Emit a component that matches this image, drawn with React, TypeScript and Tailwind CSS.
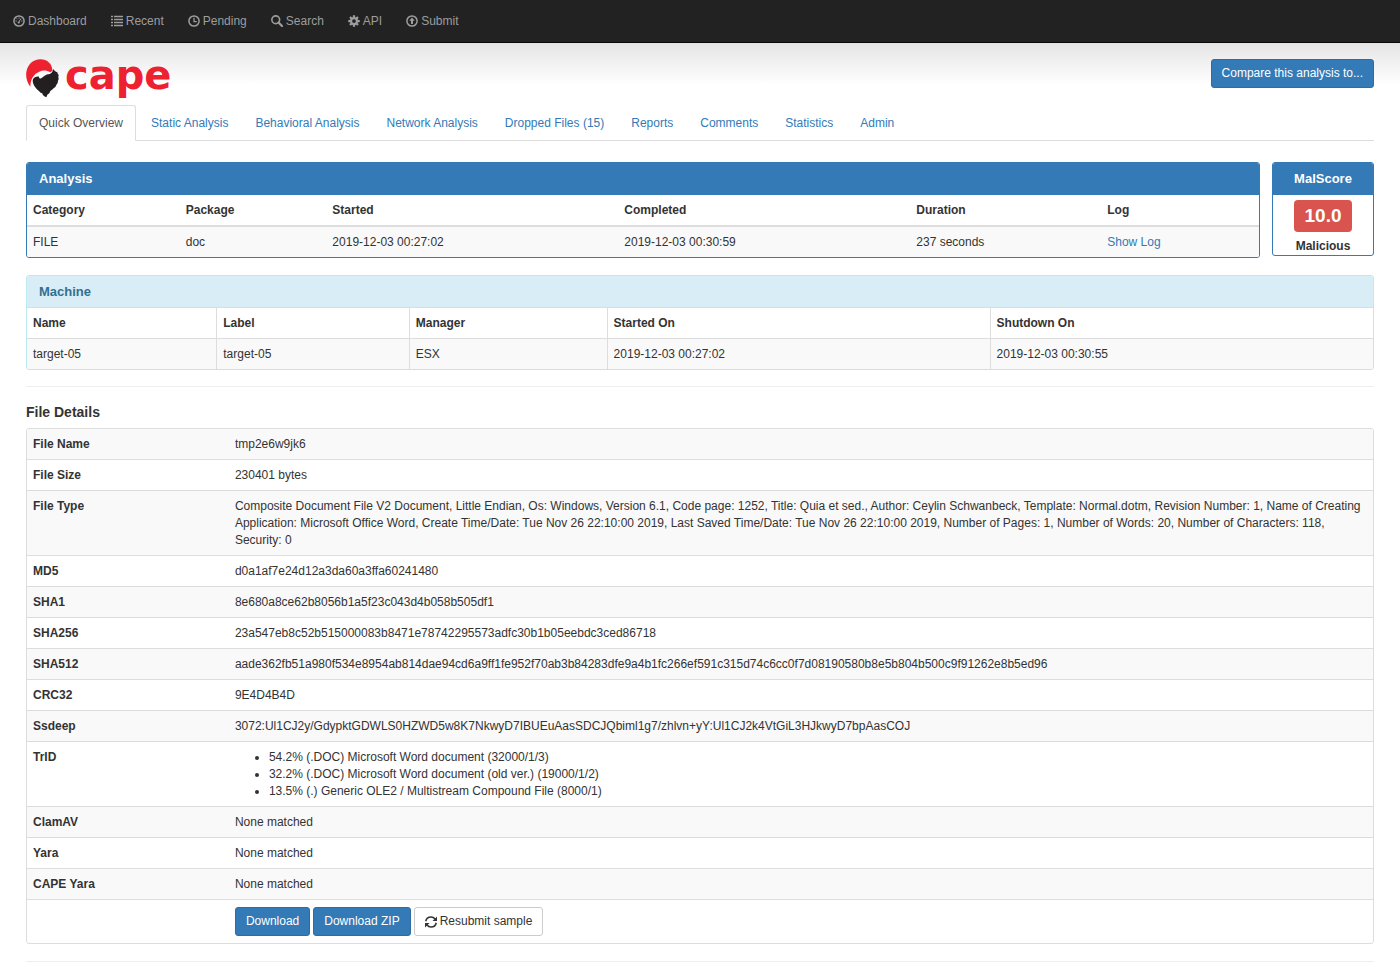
import type { ReactNode } from "react";

type IconProps = { children: ReactNode };

function Icon({ children }: IconProps) {
  return (
    <svg viewBox="0 0 24 24" className="size-3 shrink-0" fill="none" stroke="currentColor" aria-hidden="true">
      {children}
    </svg>
  );
}

const DashboardIcon = () => (
  <Icon>
    <circle cx="12" cy="12" r="10.2" strokeWidth="3" />
    <path d="M11.5 14.5 16 7" strokeWidth="2" />
    <circle cx="11.5" cy="15" r="2.2" fill="currentColor" stroke="none" />
    <path d="M5 12h2.5M7 7l1.5 1.5M12 5v2.5M16.5 12H19" strokeWidth="2" />
  </Icon>
);

const ListIcon = () => (
  <Icon>
    <path d="M0 3h4M0 9h4M0 15h4M0 21h4M6 3h18M6 9h18M6 15h18M6 21h18" strokeWidth="3" />
  </Icon>
);

const ClockIcon = () => (
  <Icon>
    <circle cx="12" cy="12" r="10.2" strokeWidth="3" />
    <path d="M12 5.5V13h5.5" strokeWidth="2.5" />
  </Icon>
);

const SearchIcon = () => (
  <Icon>
    <circle cx="9.5" cy="9.5" r="7.8" strokeWidth="3.2" />
    <path d="m15 15 7 7" strokeWidth="4.5" strokeLinecap="round" />
  </Icon>
);

const CogIcon = () => (
  <Icon>
    <circle cx="12" cy="12" r="6" strokeWidth="4.5" />
    <path d="M12 .5V5M12 19v4.5M.5 12H5M19 12h4.5M4 4l3 3M17 17l3 3M20 4l-3 3M7 17l-3 3" strokeWidth="4.5" />
  </Icon>
);

const UploadIcon = () => (
  <Icon>
    <circle cx="12" cy="12" r="10.2" strokeWidth="3" />
    <path d="m12 5 5.5 6.5H14V18h-4v-6.5H6.5z" fill="currentColor" stroke="none" />
  </Icon>
);

const RefreshIcon = () => (
  <Icon>
    <path
      d="M1.5 10.5C2.5 5 7 2 12 2c3 0 6 1.3 8 4M22.5 13.5c-1 5.5-5.5 8.5-10.5 8.5-3 0-6-1.3-8-4"
      strokeWidth="3"
    />
    <path d="M24 1v9h-9zM0 23v-9h9z" fill="currentColor" stroke="none" />
  </Icon>
);

const navItems = [
  { label: "Dashboard", icon: <DashboardIcon /> },
  { label: "Recent", icon: <ListIcon /> },
  { label: "Pending", icon: <ClockIcon /> },
  { label: "Search", icon: <SearchIcon /> },
  { label: "API", icon: <CogIcon /> },
  { label: "Submit", icon: <UploadIcon /> },
];

const tabs = [
  "Quick Overview",
  "Static Analysis",
  "Behavioral Analysis",
  "Network Analysis",
  "Dropped Files (15)",
  "Reports",
  "Comments",
  "Statistics",
  "Admin",
];

const trid = [
  "54.2% (.DOC) Microsoft Word document (32000/1/3)",
  "32.2% (.DOC) Microsoft Word document (old ver.) (19000/1/2)",
  "13.5% (.) Generic OLE2 / Multistream Compound File (8000/1)",
];

const primaryButton =
  "h-[29px] rounded-[3px] border border-[#2e6da4] bg-[#337ab7] px-2.5 text-white hover:bg-[#286090]";

const fileDetails: { name: string; value: ReactNode }[] = [
  { name: "File Name", value: "tmp2e6w9jk6" },
  { name: "File Size", value: "230401 bytes" },
  {
    name: "File Type",
    value:
      "Composite Document File V2 Document, Little Endian, Os: Windows, Version 6.1, Code page: 1252, Title: Quia et sed., Author: Ceylin Schwanbeck, Template: Normal.dotm, Revision Number: 1, Name of Creating Application: Microsoft Office Word, Create Time/Date: Tue Nov 26 22:10:00 2019, Last Saved Time/Date: Tue Nov 26 22:10:00 2019, Number of Pages: 1, Number of Words: 20, Number of Characters: 118, Security: 0",
  },
  { name: "MD5", value: "d0a1af7e24d12a3da60a3ffa60241480" },
  { name: "SHA1", value: "8e680a8ce62b8056b1a5f23c043d4b058b505df1" },
  { name: "SHA256", value: "23a547eb8c52b515000083b8471e78742295573adfc30b1b05eebdc3ced86718" },
  {
    name: "SHA512",
    value:
      "aade362fb51a980f534e8954ab814dae94cd6a9ff1fe952f70ab3b84283dfe9a4b1fc266ef591c315d74c6cc0f7d08190580b8e5b804b500c9f91262e8b5ed96",
  },
  { name: "CRC32", value: "9E4D4B4D" },
  {
    name: "Ssdeep",
    value: "3072:Ul1CJ2y/GdypktGDWLS0HZWD5w8K7NkwyD7IBUEuAasSDCJQbiml1g7/zhlvn+yY:Ul1CJ2k4VtGiL3HJkwyD7bpAasCOJ",
  },
  {
    name: "TrID",
    value: (
      <ul className="list-disc pl-[34px]">
        {trid.map((match) => (
          <li key={match}>{match}</li>
        ))}
      </ul>
    ),
  },
  { name: "ClamAV", value: "None matched" },
  { name: "Yara", value: "None matched" },
  { name: "CAPE Yara", value: "None matched" },
];

function Logo() {
  return (
    <a href="#" className="flex h-10 items-start gap-1.5" aria-label="cape">
      <svg viewBox="0 5 99 120" className="h-10 w-[33px]" aria-hidden="true">
        <path
          d="M13 88C3 76-1 60 1 45 4 22 22 6 43 6c21 0 36 14 36 34l-6 5C62 38 50 38 40 43 24 50 14 62 13 88Z"
          fill="#ee2130"
        />
        <path
          d="M21 66c4-7 10-9 18-8-1 4 3 6 7 5 7-5 11-10 19-12 9-1 15-4 16-16l5 5 4 3 4 2 1 4 3 4-1 6 1 6-2 5-1 7-4 6-3 6-5 4-5 4-5 4-3 7-6 4-3 8c-7-3-12-7-13-14l-3 2c-3-6-11-9-15-15-7-9-12-20-9-27Z"
          fill="#231f20"
        />
      </svg>
      <span className="font-['DejaVu_Sans',sans-serif] text-[40px] leading-8 font-bold text-[#ee2130]">cape</span>
    </a>
  );
}

export default function App() {
  return (
    <div className="font-['Liberation_Sans',Arial,sans-serif] text-[12px] leading-[17px] text-[#333]">
      <nav className="flex h-[43px] border-b border-[#080808] bg-[#222] px-px">
        {navItems.map((item) => (
          <a key={item.label} href="#" className="flex items-center gap-[3px] px-3 text-[#9d9d9d]">
            {item.icon}
            {item.label}
          </a>
        ))}
      </nav>

      <main className="bg-linear-to-b from-[#e5e5e5] to-white to-[42px] px-[26px] pt-4 pb-3">
        <header className="flex items-start justify-between">
          <Logo />
          <button type="button" className={primaryButton}>
            Compare this analysis to...
          </button>
        </header>

        <div className="mt-1.5 flex gap-[3px] border-b border-[#ddd]">
          {tabs.map((tab, i) => (
            <a
              key={tab}
              href="#"
              className={
                i === 0
                  ? "-mb-px rounded-t-[3px] border border-[#ddd] border-b-white bg-white px-3 pt-[9px] pb-[7px] text-[#555]"
                  : "px-3 pt-2.5 pb-2 text-[#337ab7] hover:underline"
              }
            >
              {tab}
            </a>
          ))}
        </div>

        <div className="mt-[21px] flex items-start gap-3">
          <section className="flex-1 overflow-hidden rounded-[3px] border border-[#337ab7]">
            <h2 className="bg-[#337ab7] px-3 py-2 text-[13px] leading-4 font-bold text-white">Analysis</h2>
            <table className="w-full table-fixed text-left">
              <thead>
                <tr className="border-b-2 border-[#ddd]">
                  <th className="w-[12.4%] px-1.5 pt-[7px] pb-[6px]">Category</th>
                  <th className="w-[11.9%] px-1.5">Package</th>
                  <th className="w-[23.7%] px-1.5">Started</th>
                  <th className="w-[23.7%] px-1.5">Completed</th>
                  <th className="w-[15.5%] px-1.5">Duration</th>
                  <th className="px-1.5">Log</th>
                </tr>
              </thead>
              <tbody>
                <tr className="bg-[#f9f9f9]">
                  <td className="px-1.5 pt-[7px] pb-[6px]">FILE</td>
                  <td className="px-1.5">doc</td>
                  <td className="px-1.5">2019-12-03 00:27:02</td>
                  <td className="px-1.5">2019-12-03 00:30:59</td>
                  <td className="px-1.5">237 seconds</td>
                  <td className="px-1.5">
                    <a href="#" className="text-[#337ab7] hover:underline">
                      Show Log
                    </a>
                  </td>
                </tr>
              </tbody>
            </table>
          </section>

          <section className="w-[102px] overflow-hidden rounded-[3px] border border-[#337ab7] text-center font-bold">
            <h2 className="bg-[#337ab7] py-2 text-[13px] leading-4 text-white">MalScore</h2>
            <div className="flex flex-col items-center gap-1.5 pt-[5px]">
              <span className="rounded-[4px] bg-[#d9534f] px-[11px] text-[19px] leading-8 text-white">10.0</span>
              <span>Malicious</span>
            </div>
          </section>
        </div>

        <section className="mt-[17px] overflow-hidden rounded-[3px] border border-[#bce8f1]">
          <h2 className="border-b border-[#bce8f1] bg-[#d9edf7] px-3 pt-2 pb-[7px] text-[13px] leading-4 font-bold text-[#31708f]">
            Machine
          </h2>
          <table className="w-full table-fixed text-left">
            <thead>
              <tr className="divide-x divide-[#ddd] border-b border-[#ddd]">
                <th className="w-[14.1%] px-1.5 pt-[7px] pb-[6px]">Name</th>
                <th className="w-[14.3%] px-1.5">Label</th>
                <th className="w-[14.7%] px-1.5">Manager</th>
                <th className="px-1.5">Started On</th>
                <th className="px-1.5">Shutdown On</th>
              </tr>
            </thead>
            <tbody>
              <tr className="divide-x divide-[#ddd] bg-[#f9f9f9]">
                <td className="px-1.5 pt-[7px] pb-[6px]">target-05</td>
                <td className="px-1.5">target-05</td>
                <td className="px-1.5">ESX</td>
                <td className="px-1.5">2019-12-03 00:27:02</td>
                <td className="px-1.5">2019-12-03 00:30:55</td>
              </tr>
            </tbody>
          </table>
        </section>

        <hr className="mt-4 mb-[17px] border-[#eee]" />

        <h2 className="text-[14px] font-bold">File Details</h2>
        <section className="mt-[7px] overflow-hidden rounded-[3px] border border-[#ddd]">
          <table className="w-full table-fixed text-left">
            <tbody>
              {fileDetails.map((row) => (
                <tr key={row.name} className="border-b border-[#ddd] align-top odd:bg-[#f9f9f9]">
                  <th className="w-[15%] px-1.5 pt-[7px] pb-[6px]">{row.name}</th>
                  <td className="px-1.5 pt-[7px] pb-[6px]">{row.value}</td>
                </tr>
              ))}
              <tr>
                <td />
                <td className="px-1.5 py-[7px]">
                  <div className="flex gap-[3px]">
                    <button type="button" className={primaryButton}>
                      Download
                    </button>
                    <button type="button" className={primaryButton}>
                      Download ZIP
                    </button>
                    <button
                      type="button"
                      className="flex h-[29px] items-center gap-[3px] rounded-[3px] border border-[#ccc] bg-white px-2.5 hover:bg-[#e6e6e6]"
                    >
                      <RefreshIcon />
                      Resubmit sample
                    </button>
                  </div>
                </td>
              </tr>
            </tbody>
          </table>
        </section>

        <hr className="mt-[17px] border-[#eee]" />
      </main>
    </div>
  );
}
